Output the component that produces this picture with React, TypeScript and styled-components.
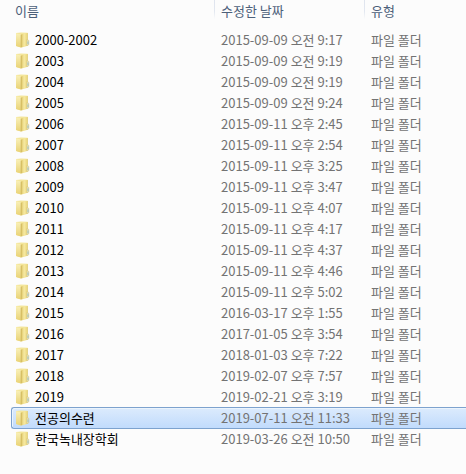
import React from "react";
import styled, { createGlobalStyle } from "styled-components";

const GlobalStyle = createGlobalStyle`
  * { box-sizing: border-box; }
  body {
    margin: 0;
    background: #fcfcfc;
    overflow-x: hidden;
    font-family: "Noto Sans CJK KR", sans-serif;
    font-size: 13px;
    line-height: 20px;
  }
`;

const FileTable = styled.table`
  display: block;
  padding-left: 11px;
`;

const Head = styled.thead`
  display: block;
`;

const Body = styled.tbody`
  display: block;
`;

const HeadRow = styled.tr`
  display: grid;
  grid-template-columns: 203px 150px 1fr;
  height: 29px;
`;

const HeadCell = styled.th<{ $divided?: boolean }>`
  padding: 1px 0 0 ${(p) => (p.$divided ? 6 : 3)}px;
  border-left: 1px solid transparent;
  border-image: ${(p) => (p.$divided ? "linear-gradient(#dfe4ee, #e2e7f0 40%, #fcfcfc 65%) 1" : "none")};
  color: #4c607a;
  font-weight: 400;
  text-align: left;
`;

const Row = styled.tr<{ $selected: boolean }>`
  display: grid;
  grid-template-columns: 203px 150px 1fr;
  height: 22px;
  margin-bottom: -1px;
  border: 1px solid ${(p) => (p.$selected ? "#7da2ce" : "transparent")};
  border-right: 0;
  border-radius: 3px 0 0 3px;
  background: ${(p) => (p.$selected ? "linear-gradient(#dcebfd, #c1dbfc)" : "none")};
  box-shadow: ${(p) => (p.$selected ? "inset 1px 1px 0 #ebf4fd" : "none")};
`;

const NameCell = styled.td`
  display: flex;
  align-items: center;
  gap: 4px;
  padding: 0 0 0 3px;
  color: #000;
  white-space: nowrap;
`;

const InfoCell = styled.td`
  padding: 0 0 0 6px;
  color: #737373;
  white-space: nowrap;
`;

const IconBox = styled.svg`
  flex: none;
  width: 16px;
  height: 16px;
`;

const FolderIcon = () => (
  <IconBox viewBox="0 0 16 16" aria-hidden="true">
    <defs>
      <linearGradient id="folder-front" x1="0" y1="0" x2="1" y2="0">
        <stop offset="0" stopColor="#e0c96a" />
        <stop offset="0.45" stopColor="#f6e9a2" />
        <stop offset="1" stopColor="#ead576" />
      </linearGradient>
      <linearGradient id="folder-left" x1="0" y1="0" x2="0" y2="1">
        <stop offset="0" stopColor="#f9f0b8" />
        <stop offset="1" stopColor="#e9d274" />
      </linearGradient>
    </defs>
    <path d="M1 1 6 0.5 12.6 0.8V13.6L6 15.4 1 14Z" fill="#f4e69b" />
    <path d="M6.4 2.2 12.6 1V13.7L6.4 15.4Z" fill="url(#folder-front)" />
    <path d="M1 1.3 5.9 2.6V15.6L1 14Z" fill="url(#folder-left)" />
    <path d="M6.2 2.8V15.2" stroke="#ccb256" strokeWidth="0.9" />
    <path d="M12.5 1.2V7.5" stroke="#dcc97e" strokeWidth="0.6" />
    <path d="M11.8 7.6 13.8 8.4V12.8L11.8 13.7Z" fill="#f0e8bd" stroke="#cdbd78" strokeWidth="0.5" />
    <path d="M13 9.4V12.2" stroke="#84b4c6" strokeWidth="0.8" />
  </IconBox>
);

const files = [
  ["2000-2002", "2015-09-09 오전 9:17"],
  ["2003", "2015-09-09 오전 9:19"],
  ["2004", "2015-09-09 오전 9:19"],
  ["2005", "2015-09-09 오전 9:24"],
  ["2006", "2015-09-11 오후 2:45"],
  ["2007", "2015-09-11 오후 2:54"],
  ["2008", "2015-09-11 오후 3:25"],
  ["2009", "2015-09-11 오후 3:47"],
  ["2010", "2015-09-11 오후 4:07"],
  ["2011", "2015-09-11 오후 4:17"],
  ["2012", "2015-09-11 오후 4:37"],
  ["2013", "2015-09-11 오후 4:46"],
  ["2014", "2015-09-11 오후 5:02"],
  ["2015", "2016-03-17 오후 1:55"],
  ["2016", "2017-01-05 오후 3:54"],
  ["2017", "2018-01-03 오후 7:22"],
  ["2018", "2019-02-07 오후 7:57"],
  ["2019", "2019-02-21 오후 3:19"],
  ["전공의수련", "2019-07-11 오전 11:33"],
  ["한국녹내장학회", "2019-03-26 오전 10:50"],
];

export default function App() {
  return (
    <>
      <GlobalStyle />
      <FileTable>
        <Head>
          <HeadRow>
            <HeadCell scope="col">이름</HeadCell>
            <HeadCell scope="col" $divided>수정한 날짜</HeadCell>
            <HeadCell scope="col" $divided>유형</HeadCell>
          </HeadRow>
        </Head>
        <Body>
          {files.map(([name, modified]) => (
            <Row key={name} $selected={name === "전공의수련"} aria-selected={name === "전공의수련"}>
              <NameCell><FolderIcon />{name}</NameCell>
              <InfoCell>{modified}</InfoCell>
              <InfoCell>파일 폴더</InfoCell>
            </Row>
          ))}
        </Body>
      </FileTable>
    </>
  );
}
